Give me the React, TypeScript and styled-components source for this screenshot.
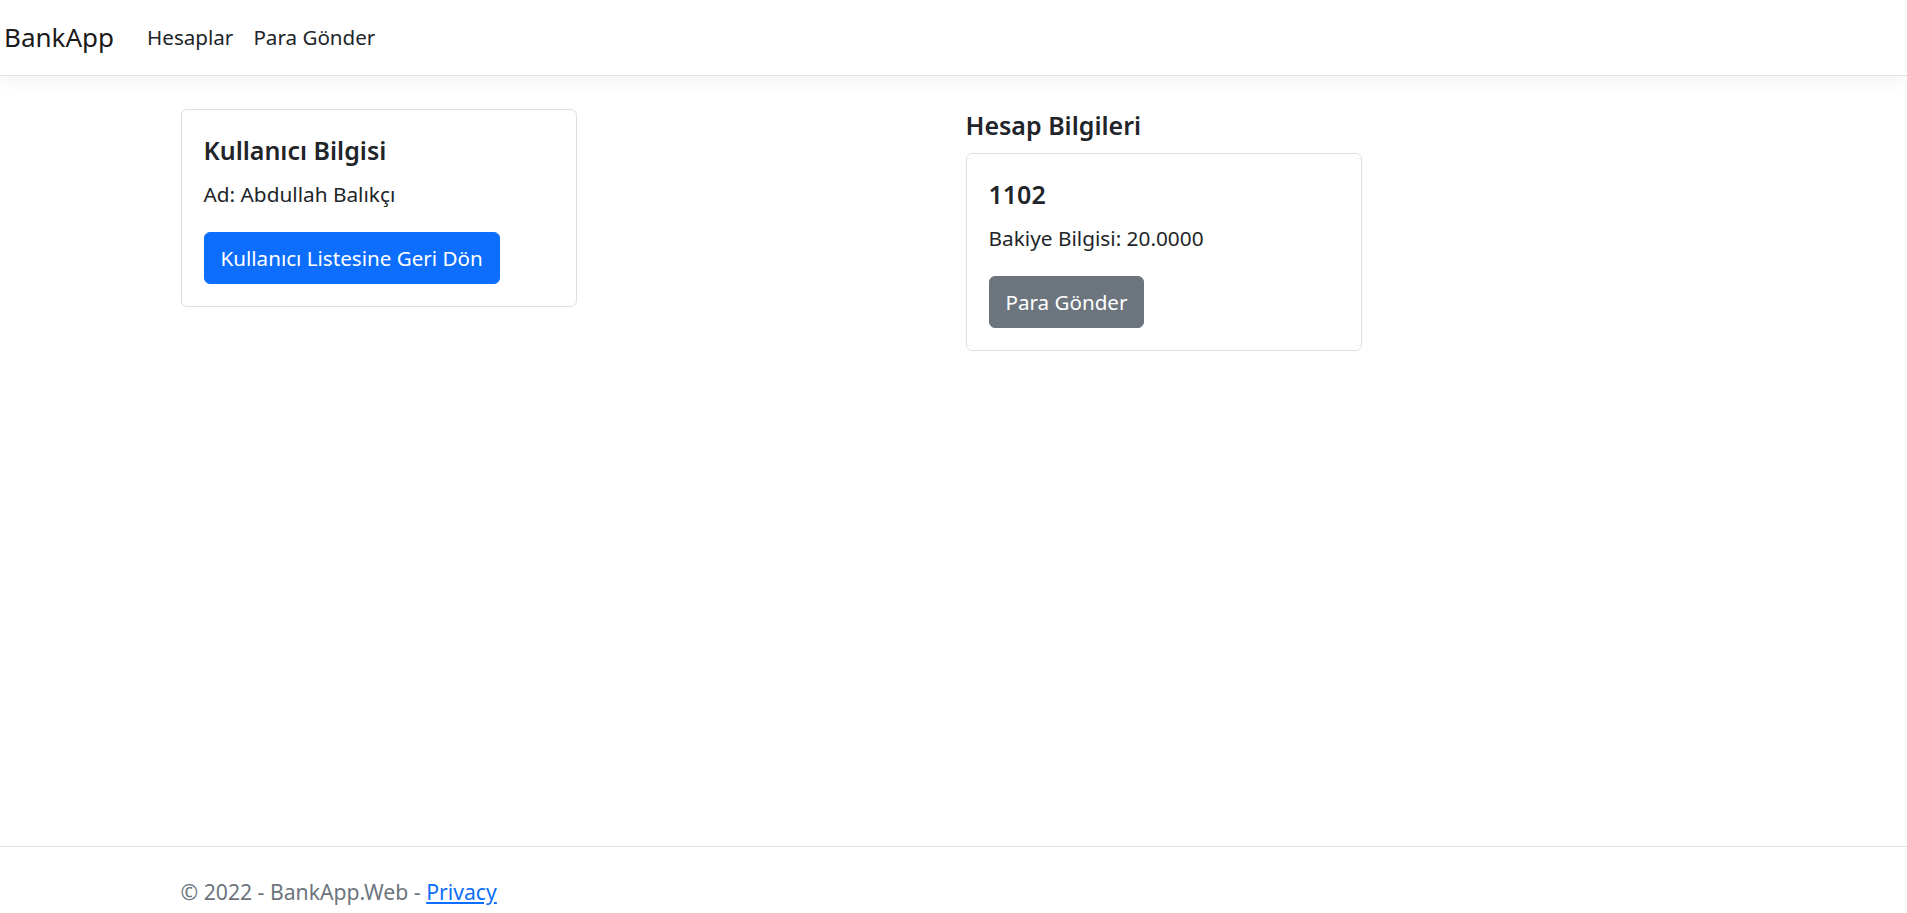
import styled, { createGlobalStyle } from "styled-components";

const GlobalStyle = createGlobalStyle`
  html, body {
    margin: 0;
    padding: 0;
    background: #fff;
  }
  body {
    font-family: "Noto Sans", "Open Sans", sans-serif;
    color: #212529;
    font-size: 20.8px;
  }
  * { box-sizing: border-box; }
`;

export default function App() {
  return (
    <Page>
      <GlobalStyle />
      <Navbar>
        <Brand href="#">BankApp</Brand>
        <NavList>
          <NavLink href="#">Hesaplar</NavLink>
          <NavLink href="#">Para Gönder</NavLink>
        </NavList>
      </Navbar>

      <Main>
        <Row>
          <Column>
            <Card>
              <CardTitle>Kullanıcı Bilgisi</CardTitle>
              <CardText>Ad: Abdullah Balıkçı</CardText>
              <Button variant="primary">Kullanıcı Listesine Geri Dön</Button>
            </Card>
          </Column>
          <Column>
            <SectionTitle>Hesap Bilgileri</SectionTitle>
            <Card>
              <CardTitle>1102</CardTitle>
              <CardText>Bakiye Bilgisi: 20.0000</CardText>
              <Button variant="secondary">Para Gönder</Button>
            </Card>
          </Column>
        </Row>
      </Main>

      <Footer>
        <FooterInner>
          © 2022 - BankApp.Web - <FooterLink href="#">Privacy</FooterLink>
        </FooterInner>
      </Footer>
    </Page>
  );
}

const Page = styled.div`
  min-height: 100vh;
  display: flex;
  flex-direction: column;
`;

const Navbar = styled.nav`
  height: 76px;
  display: flex;
  align-items: center;
  padding: 0 4px;
  background: #fff;
  border-bottom: 1px solid #dee2e6;
  box-shadow: 0 5px 16px rgba(0, 0, 0, 0.05);
`;

const Brand = styled.a`
  font-size: 26px;
  color: #1a1a1a;
  text-decoration: none;
  margin-right: 22px;
  line-height: 1.5;
`;

const NavList = styled.div`
  display: flex;
  align-items: center;
`;

const NavLink = styled.a`
  font-size: 20.6px;
  color: #212529;
  text-decoration: none;
  padding: 0 10px;
  line-height: 1.5;
  &:first-child {
    padding-left: 11px;
  }
`;

const Main = styled.main`
  flex: 1;
  width: 1570px;
  margin: 0 auto;
  padding: 33px 12px 0;
`;

const Row = styled.div`
  display: grid;
  grid-template-columns: 785px 785px;
  margin: 0 -12px;
`;

const Column = styled.div`
  padding: 0 12px;
`;

const SectionTitle = styled.h5`
  margin: 0 0 11px;
  font-size: 25px;
  font-weight: 600;
  line-height: 33px;
`;

const Card = styled.div`
  width: 396px;
  border: 1px solid rgba(0, 0, 0, 0.125);
  border-radius: 6px;
  padding: 22px;
`;

const CardTitle = styled.h5`
  margin: 0 0 11px;
  padding-top: 2px;
  font-size: 25px;
  font-weight: 600;
  line-height: 33px;
`;

const CardText = styled.p`
  margin: 0 0 21px;
  font-size: 20.8px;
  line-height: 33px;
`;

const Button = styled.button<{ variant: "primary" | "secondary" }>`
  display: inline-block;
  height: 52px;
  padding: 0 16px;
  font-family: inherit;
  font-size: 20.6px;
  color: #fff;
  border: 1px solid ${(p) => (p.variant === "primary" ? "#0d6efd" : "#6c757d")};
  background: ${(p) => (p.variant === "primary" ? "#0d6efd" : "#6c757d")};
  border-radius: 6px;
  cursor: pointer;
`;

const Footer = styled.footer`
  height: 67px;
  border-top: 1px solid #dee2e6;
  color: #6c757d;
  font-size: 21.2px;
`;

const FooterInner = styled.div`
  width: 1570px;
  margin: 0 auto;
  padding: 28px 12px 0;
  line-height: 33px;
`;

const FooterLink = styled.a`
  color: #0d6efd;
  text-decoration: underline;
`;
